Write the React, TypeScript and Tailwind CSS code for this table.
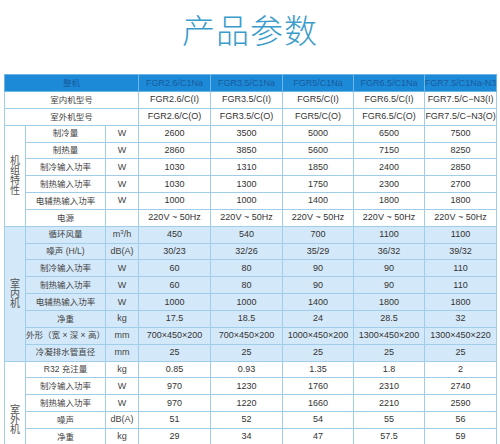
import React from "react";

type Row = { name: React.ReactNode; unit?: React.ReactNode; values: string[] };

const models = ["FGR2.6/C1Na", "FGR3.5/C1Na", "FGR5/C1Na", "FGR6.5/C1Na", "FGR7.5/C1Na-N3"];
const indoorModels = ["FGR2.6/C(I)", "FGR3.5/C(I)", "FGR5/C(I)", "FGR6.5/C(I)", "FGR7.5/C−N3(I)"];
const outdoorModels = ["FGR2.6/C(O)", "FGR3.5/C(O)", "FGR5/C(O)", "FGR6.5/C(O)", "FGR7.5/C−N3(O)"];

const unitRows: Row[] = [
  { name: "制冷量", unit: "W", values: ["2600", "3500", "5000", "6500", "7500"] },
  { name: "制热量", unit: "W", values: ["2860", "3850", "5600", "7150", "8250"] },
  { name: "制冷输入功率", unit: "W", values: ["1030", "1310", "1850", "2400", "2850"] },
  { name: "制热输入功率", unit: "W", values: ["1030", "1300", "1750", "2300", "2700"] },
  { name: "电辅热输入功率", unit: "W", values: ["1000", "1000", "1400", "1800", "1800"] },
  { name: "电源", unit: "", values: Array(5).fill("220V ~ 50Hz") },
];

const indoorRows: Row[] = [
  {
    name: "循环风量",
    unit: (
      <>
        m<sup className="text-[6px]">3</sup>/h
      </>
    ),
    values: ["450", "540", "700", "1100", "1100"],
  },
  { name: "噪声 (H/L)", unit: "dB(A)", values: ["30/23", "32/26", "35/29", "36/32", "39/32"] },
  { name: "制冷输入功率", unit: "W", values: ["60", "80", "90", "90", "110"] },
  { name: "制热输入功率", unit: "W", values: ["60", "80", "90", "90", "110"] },
  { name: "电辅热输入功率", unit: "W", values: ["1000", "1000", "1400", "1800", "1800"] },
  { name: "净重", unit: "kg", values: ["17.5", "18.5", "24", "28.5", "32"] },
  {
    name: "外形（宽 × 深 × 高）",
    unit: "mm",
    values: ["700×450×200", "700×450×200", "1000×450×200", "1300×450×200", "1300×450×220"],
  },
  { name: "冷凝排水管直径", unit: "mm", values: ["25", "25", "25", "25", "25"] },
];

const outdoorRows: Row[] = [
  { name: "R32 充注量", unit: "kg", values: ["0.85", "0.93", "1.35", "1.8", "2"] },
  { name: "制冷输入功率", unit: "W", values: ["970", "1230", "1760", "2310", "2740"] },
  { name: "制热输入功率", unit: "W", values: ["970", "1220", "1660", "2210", "2590"] },
  { name: "噪声", unit: "dB(A)", values: ["51", "52", "54", "55", "56"] },
  { name: "净重", unit: "kg", values: ["29", "34", "47", "57.5", "59"] },
  { name: "外形（宽 × 深 × 高）", unit: "mm", values: ["776×320×540", "776×320×540", "842×324×596", "946×410×810", "946×410×810"] },
  { name: "配管尺寸", unit: "mm", values: ["6.35/9.52", "6.35/9.52", "6.35/12.7", "9.52/15.88", "9.52/15.88"] },
];

const cell = "border border-[#9fcdea] p-0 leading-none";

// centred cell content
const C = ({ children, className = "" }: { children: React.ReactNode; className?: string }) => (
  <div className={`flex items-center justify-center whitespace-nowrap ${className}`}>{children}</div>
);

const Group = ({ label, rows, bg }: { label: string; rows: Row[]; bg: string }) => (
  <>
    {rows.map((r, i) => (
      <tr key={i} className={`h-[16.85px] ${bg}`}>
        {i === 0 && (
          <td rowSpan={rows.length} className={`${cell} text-[10px] text-[#555]`}>
            <div className="flex flex-col items-center leading-[10px]">
              {label.split("").map((c, j) => (
                <span key={j}>{c}</span>
              ))}
            </div>
          </td>
        )}
        <td className={`${cell} text-[8.5px] text-[#444]`}>
          <C>{r.name}</C>
        </td>
        <td className={`${cell} text-[#444]`}>
          <C>{r.unit}</C>
        </td>
        {r.values.map((v, k) => (
          <td key={k} className={`${cell} text-[#333]`}>
            <C>{v}</C>
          </td>
        ))}
      </tr>
    ))}
  </>
);

export default function App() {
  return (
    <div
      className="w-[500px] h-[444px] overflow-hidden bg-white"
      style={{ fontFamily: '"Liberation Sans", "Noto Sans CJK SC", sans-serif' }}
    >
      {/* Title */}
      <div className="h-[74px] flex items-start justify-center pt-[15px]">
        <h1 className="text-[33px] leading-none font-light tracking-[1px] text-[#3b9ccb]">产品参数</h1>
      </div>

      {/* Spec table */}
      <table className="ml-[4px] w-[492px] table-fixed border-collapse text-[9px]">
        <colgroup>
          <col className="w-[21px]" />
          <col className="w-[80px]" />
          <col className="w-[33px]" />
          <col className="w-[72px]" />
          <col className="w-[72px]" />
          <col className="w-[71px]" />
          <col className="w-[71px]" />
          <col className="w-[72px]" />
        </colgroup>
        <tbody>
          <tr className="h-[17px] bg-[#1d8ad8] text-[#185b9c]">
            <td colSpan={3} className="border border-[#6fb6e6] p-0 leading-none">
              <C className="text-[8.5px]">整机</C>
            </td>
            {models.map((m) => (
              <td key={m} className="border border-[#6fb6e6] p-0 leading-none">
                <C>{m}</C>
              </td>
            ))}
          </tr>
          <tr className="h-[16.85px]">
            <td colSpan={3} className={`${cell} text-[8.5px] text-[#444]`}>
              <C>室内机型号</C>
            </td>
            {indoorModels.map((m) => (
              <td key={m} className={`${cell} text-[#333]`}>
                <C>{m}</C>
              </td>
            ))}
          </tr>
          <tr className="h-[16.85px]">
            <td colSpan={3} className={`${cell} text-[8.5px] text-[#444]`}>
              <C>室外机型号</C>
            </td>
            {outdoorModels.map((m) => (
              <td key={m} className={`${cell} text-[#333]`}>
                <C>{m}</C>
              </td>
            ))}
          </tr>
          <Group label="机组特性" rows={unitRows} bg="bg-white" />
          <Group label="室内机" rows={indoorRows} bg="bg-[#d3e8f8]" />
          <Group label="室外机" rows={outdoorRows} bg="bg-white" />
        </tbody>
      </table>
    </div>
  );
}
